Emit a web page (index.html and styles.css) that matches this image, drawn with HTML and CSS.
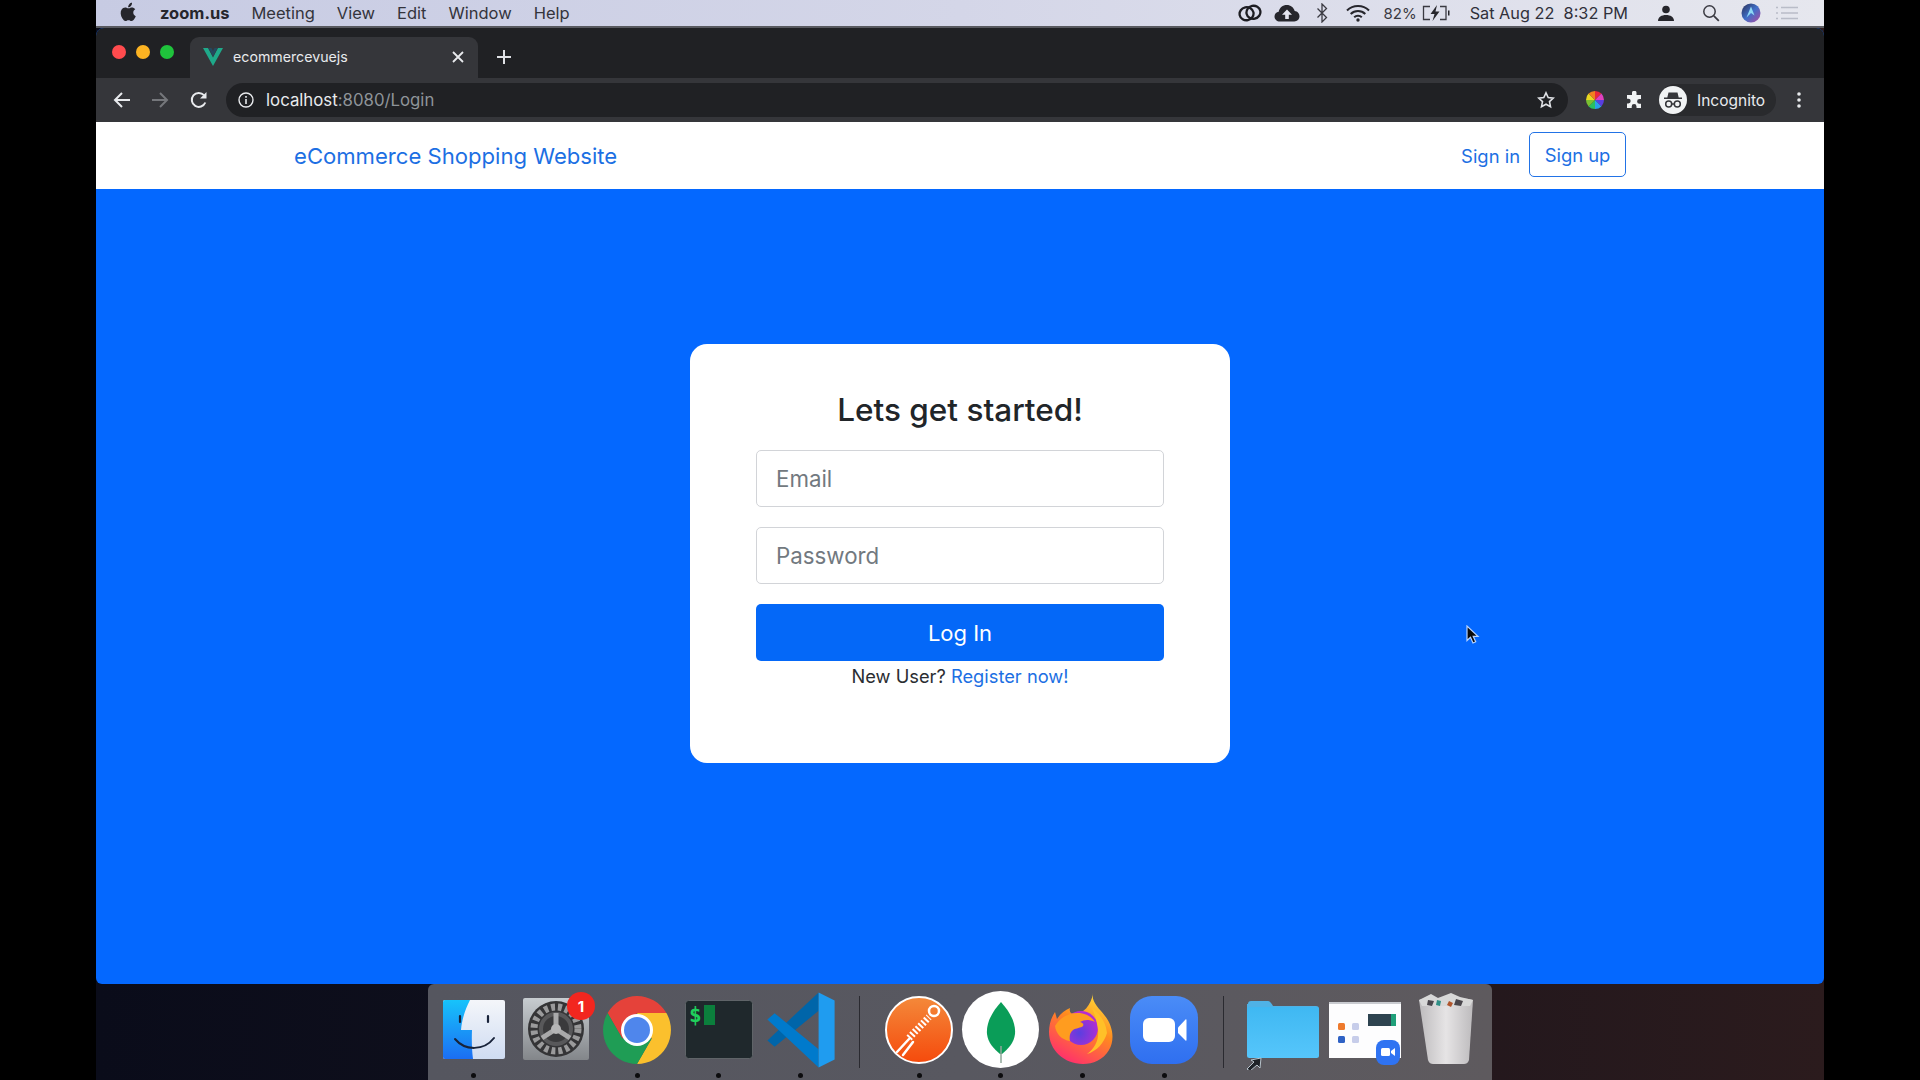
FILE: index.html
```html
<!DOCTYPE html>
<html lang="en">
<head>
<meta charset="utf-8">
<title>ecommercevuejs</title>
<link rel="stylesheet" href="styles.css">
</head>
<body>
<div class="screen">
  <header class="menubar">
    <svg class="apple" viewBox="0 0 20 24" width="17" height="20"><path fill="#26262c" d="M14.2 1c.1 1.500-.4 2.800-1.300 3.800-.9 1-2.100 1.600-3.300 1.500-.2-1.400.5-2.800 1.300-3.700C11.800 1.600 13.200 1 14.200 1zM18.700 17c-.5 1.200-.8 1.700-1.400 2.700-.9 1.400-2.100 3.100-3.700 3.100-1.400 0-1.700-.9-3.600-.9s-2.300.9-3.700.9c-1.500 0-2.700-1.500-3.600-2.900C.3 16.100 0 11.500 1.600 9.200 2.700 7.500 4.400 6.600 6 6.600c1.700 0 2.700.9 4.100.9 1.300 0 2.100-.9 4-.9 1.400 0 2.900.8 4 2.100-3.500 1.900-2.900 6.900.6 8.300z"/></svg>
    <span class="app-name">zoom.us</span>
    <span class="menu-item">Meeting</span>
    <span class="menu-item">View</span>
    <span class="menu-item">Edit</span>
    <span class="menu-item">Window</span>
    <span class="menu-item">Help</span>
    <div class="status">
      <svg class="st-cc" viewBox="0 0 24 18" width="24" height="18"><g fill="none" stroke="#1d1d22" stroke-width="2.300" transform="rotate(-12 12 9)"><ellipse cx="8.500" cy="9" rx="7" ry="6.500"/><ellipse cx="15.500" cy="9" rx="7" ry="6.500"/></g></svg>
      <svg class="st-cloud" viewBox="0 0 26 18" width="26" height="18"><path fill="#26262c" d="M6 17.500C2.800 17.500.5 15.400.5 12.500c0-2.500 1.800-4.400 4.200-4.800C5.500 3.700 8.800 1 12.800 1c3.800 0 7 2.500 7.900 6.100 2.800.2 4.800 2.500 4.800 5.200 0 2.900-2.300 5.200-5.200 5.200z"/><path fill="#e4e5ef" d="M13 5.500l5 5.200h-3.200v4.300h-3.600v-4.300H8z"/></svg>
      <svg class="st-bt" viewBox="0 0 12 20" width="12" height="20"><path fill="none" stroke="#3a3a42" stroke-width="1.300" d="M1.500 5.500l9 9-4.500 4.500V1l4.500 4.500-9 9"/></svg>
      <svg class="st-wifi" viewBox="0 0 24 18" width="24" height="18"><g fill="none" stroke="#26262c" stroke-width="2"><path d="M1 6.500c6-6 16-6 22 0"/><path d="M4.700 10c4-4 10.600-4 14.600 0"/><path d="M8.200 13.200c2-2 5.600-2 7.600 0"/></g><circle cx="12" cy="16" r="1.700" fill="#26262c"/></svg>
      <span class="st-pct">82%</span>
      <svg class="st-batt" viewBox="0 0 28 16" width="28" height="16"><g fill="none" stroke="#3a3a42" stroke-width="1.300"><path d="M8 1.500H1.500v13H8M18 1.500h6v13h-6"/></g><path fill="#26262c" d="M15 0L8.500 9h4L10.500 16l7-9.500h-4zM26 5.500h1.500v5H26z"/></svg>
      <span class="st-date">Sat Aug 22&nbsp; 8:32 PM</span>
      <svg class="st-person" viewBox="0 0 16 16" width="16" height="16"><circle cx="8" cy="4.500" r="3.800" fill="#26262c"/><path fill="#26262c" d="M0 16c0-4 3.500-6 8-6s8 2 8 6z"/></svg>
      <svg class="st-search" viewBox="0 0 18 18" width="18" height="18"><circle cx="7.500" cy="7.500" r="5.700" fill="none" stroke="#3a3a42" stroke-width="1.500"/><path stroke="#3a3a42" stroke-width="1.800" d="M11.800 11.800l5 5"/></svg>
      <svg class="st-siri" viewBox="0 0 20 20" width="20" height="20"><defs><linearGradient id="siri" x1="0" y1="0" x2="1" y2="1"><stop offset="0" stop-color="#2b2f55"/><stop offset=".5" stop-color="#3f6fc8"/><stop offset="1" stop-color="#b04ba0"/></linearGradient></defs><circle cx="10" cy="10" r="9.500" fill="url(#siri)"/><path fill="#8ed8f4" d="M10 3.500l3.500 9-3.500-2.500-4.500 4.500z"/></svg>
      <svg class="st-list" viewBox="0 0 22 14" width="22" height="14"><g stroke="#b9bcc8" stroke-width="1.400"><path d="M0 1.500h2M5 1.500h17M0 7h2M5 7h17M0 12.500h2M5 12.500h17"/></g></svg>
    </div>
  </header>

  <section class="browser">
    <div class="tabstrip">
      <div class="lights"><i class="light red"></i><i class="light amber"></i><i class="light green"></i></div>
      <div class="tab">
        <svg class="favicon" viewBox="0 0 20 18" width="20" height="18"><path fill="#1fa98a" d="M0 0h5l5 9.500L15 0h5L10 18z"/><path fill="#23485f" d="M5.500 0h3L10 3l1.500-3h3L10 8.500z"/></svg>
        <span class="tab-title">ecommercevuejs</span>
        <svg class="tab-close" viewBox="0 0 12 12" width="12" height="12"><path stroke="#e8eaed" stroke-width="1.800" d="M1 1l10 10M11 1L1 11"/></svg>
      </div>
      <svg class="new-tab" viewBox="0 0 16 16" width="16" height="16"><path stroke="#dfe1e5" stroke-width="2" d="M8 1v14M1 8h14"/></svg>
    </div>
    <div class="toolbar">
      <svg class="tool" viewBox="0 0 18 18" width="18" height="18"><path fill="none" stroke="#e8eaed" stroke-width="2" d="M17 9H2M9 2L2 9l7 7"/></svg>
      <svg class="tool" viewBox="0 0 18 18" width="18" height="18"><path fill="none" stroke="#75777b" stroke-width="2" d="M1 9h15M9 2l7 7-7 7"/></svg>
      <svg class="tool reload" viewBox="0 0 18 18" width="18" height="18"><path fill="none" stroke="#e8eaed" stroke-width="2" d="M15.300 11.500A7 7 0 1 1 14 4.200"/><path fill="#e8eaed" d="M16.500 1v6.500H10z"/></svg>
      <div class="omnibox">
        <svg viewBox="0 0 16 16" width="16" height="16"><circle cx="8" cy="8" r="7" fill="none" stroke="#e8eaed" stroke-width="1.400"/><path stroke="#e8eaed" stroke-width="1.600" d="M8 7v5M8 4v1.700"/></svg>
        <span class="url"><span class="url-host">localhost</span>:8080/Login</span>
        <svg class="star" viewBox="0 0 18 18" width="18" height="18"><path fill="none" stroke="#dfe1e5" stroke-width="1.600" d="M9 1.800l2.200 4.700 5.100.6-3.800 3.500 1 5.100L9 13.200l-4.500 2.500 1-5.100L1.700 7.100l5.100-.6z"/></svg>
      </div>
      <svg class="ext-wheel" viewBox="0 0 20 20" width="20" height="20">
        <path fill="#e8283c" d="M10 10L10 1 A9 9 0 0 1 16.400 3.600z"/><path fill="#e040c0" d="M10 10L16.400 3.600 A9 9 0 0 1 19 10z"/><path fill="#5a3de0" d="M10 10L19 10 A9 9 0 0 1 16.400 16.400z"/><path fill="#2aa0e8" d="M10 10L16.400 16.400 A9 9 0 0 1 10 19z"/><path fill="#28c060" d="M10 10L10 19 A9 9 0 0 1 3.600 16.400z"/><path fill="#7ac030" d="M10 10L3.600 16.400 A9 9 0 0 1 1 10z"/><path fill="#e8d820" d="M10 10L1 10 A9 9 0 0 1 3.600 3.600z"/><path fill="#f08020" d="M10 10L3.600 3.600 A9 9 0 0 1 10 1z"/>
      </svg>
      <svg class="ext-puzzle" viewBox="0 0 18 18" width="18" height="18"><path fill="#f1f3f4" d="M7 1.500a2.300 2.300 0 0 1 4.500 0V4h4.500v4h-1.500a2.400 2.400 0 0 0 0 4.800H16V17h-4.500v-1.500a2.400 2.400 0 0 0-4.800 0V17H2v-4.500h1.300a2.400 2.400 0 0 0 0-4.800H2V4h5z"/></svg>
      <div class="profile">
        <svg viewBox="0 0 28 28" width="28" height="28"><circle cx="14" cy="14" r="14" fill="#f1f3f4"/><path fill="#35363a" d="M9.500 6.500h9l1.200 5H23v1.500H5v-1.500h3.300z"/><g fill="none" stroke="#35363a" stroke-width="1.500"><circle cx="9.700" cy="18" r="3"/><circle cx="18.300" cy="18" r="3"/><path d="M12.700 18h2.600"/></g></svg>
        <span class="profile-name">Incognito</span>
      </div>
      <svg class="kebab" viewBox="0 0 4 16" width="4" height="16"><g fill="#e8eaed"><circle cx="2" cy="2" r="1.800"/><circle cx="2" cy="8" r="1.800"/><circle cx="2" cy="14" r="1.800"/></g></svg>
    </div>
    <nav class="site-nav">
      <a class="brand">eCommerce Shopping Website</a>
      <div class="nav-actions">
        <a class="nav-link">Sign in</a>
        <a class="nav-button">Sign up</a>
      </div>
    </nav>
    <main class="page">
      <form class="card">
        <h1 class="card-title">Lets get started!</h1>
        <input class="field" type="text" placeholder="Email">
        <input class="field" type="password" placeholder="Password">
        <button class="submit" type="button">Log In</button>
        <p class="hint">New User? <a class="hint-link">Register now!</a></p>
      </form>
      <svg class="cursor" viewBox="0 0 16 20" width="16" height="20"><path fill="#0a0a0a" stroke="#b9d4ff" stroke-width="1.200" d="M1 1v14.500l3.500-3.300 2.500 5.800 2.700-1.200-2.500-5.500H12z"/></svg>
    </main>
  </section>

  <footer class="desktop">
    <div class="dock">
      <div class="slot">
        <svg viewBox="0 0 80 80" width="80" height="80">
          <defs><linearGradient id="fb" x1="0" y1="0" x2="0" y2="1"><stop offset="0" stop-color="#17c3fb"/><stop offset="1" stop-color="#1b6ef3"/></linearGradient><linearGradient id="fw" x1="0" y1="0" x2="0" y2="1"><stop offset="0" stop-color="#f4f6fa"/><stop offset="1" stop-color="#cfdcf2"/></linearGradient></defs>
          <rect x="9" y="10" width="62" height="59" rx="2" fill="url(#fw)"/>
          <path fill="url(#fb)" d="M11 10h25c-4 8-8 18-9 30h11c-.4 9-.2 20 1 29H11a2 2 0 0 1-2-2V12a2 2 0 0 1 2-2z"/>
          <path stroke="#18233a" stroke-width="2.200" stroke-linecap="round" d="M26 26v6M54 26v6"/>
          <path fill="none" stroke="#18233a" stroke-width="2" stroke-linecap="round" d="M21 49c10 12 29 12 39-1"/>
        </svg>
        <i class="dot"></i>
      </div>
      <div class="slot">
        <svg viewBox="0 0 80 80" width="80" height="80">
          <defs><linearGradient id="sg" x1="0" y1="0" x2="0" y2="1"><stop offset="0" stop-color="#c7ccd0"/><stop offset="1" stop-color="#83868a"/></linearGradient></defs>
          <rect x="7" y="8" width="66" height="62" rx="2" fill="url(#sg)"/>
          <circle cx="40" cy="39" r="28" fill="#343436"/>
          <circle cx="40" cy="39" r="22" fill="none" stroke="#9a9a9b" stroke-width="7" stroke-dasharray="4 3"/>
          <circle cx="40" cy="39" r="17" fill="#58585a"/>
          <circle cx="40" cy="39" r="13" fill="#3a3a3c"/>
          <g stroke="#a9a9aa" stroke-width="5"><path d="M40 39V23M40 39l14 9M40 39l-14 9"/></g>
          <circle cx="40" cy="39" r="5" fill="#b5b5b6"/>
          <circle cx="65" cy="16" r="14" fill="#f2261f"/>
          <text class="badge-num" x="65" y="21.500" text-anchor="middle">1</text>
        </svg>
      </div>
      <div class="slot">
        <svg viewBox="0 0 80 80" width="80" height="80">
          <path fill="#e5423a" d="M69.400 23A34 34 0 0 0 10.600 23L25.300 48.500 40 23z"/>
          <path fill="#fbc02d" d="M69.400 23H40L54.700 48.500 40 74A34 34 0 0 0 69.400 23z"/>
          <path fill="#1f9d55" d="M10.600 23A34 34 0 0 0 40 74L54.700 48.500H25.300z"/>
          <circle cx="40" cy="40" r="16" fill="#fff"/>
          <circle cx="40" cy="40" r="13" fill="#4f86ec"/>
        </svg>
        <i class="dot"></i>
      </div>
      <div class="slot">
        <svg viewBox="0 0 80 80" width="80" height="80">
          <rect x="6.500" y="10.500" width="67" height="58" rx="3" fill="#1f282c" stroke="#5f6468"/>
          <text class="term-prompt" x="10" y="32">$</text>
          <rect x="25" y="15" width="11" height="20" fill="#0b7f3c"/>
        </svg>
        <i class="dot"></i>
      </div>
      <div class="slot">
        <svg viewBox="0 0 100 100" width="80" height="80">
          <polygon fill="#0065a9" points="8,63 17,71 72,26 72,3"/>
          <polygon fill="#007acc" points="8,37 17,29 72,74 72,97"/>
          <polygon fill="#1f9cf0" points="72,3 92,13 92,87 72,97"/>
        </svg>
        <i class="dot"></i>
      </div>
      <div class="dock-sep"></div>
      <div class="slot">
        <svg viewBox="0 0 80 80" width="80" height="80">
          <defs><linearGradient id="pm" x1="0" y1="0" x2="0" y2="1"><stop offset="0" stop-color="#f4893a"/><stop offset="1" stop-color="#f54a0c"/></linearGradient></defs>
          <circle cx="40" cy="40" r="33" fill="url(#pm)" stroke="#fff" stroke-width="2"/>
          <g fill="none" stroke="#fff" stroke-linecap="round">
            <path stroke-width="7" stroke-linecap="butt" stroke-dasharray="2 2" d="M30 48L50 27"/>
            <path stroke-width="2.500" d="M30 49L18 62M34 52L24 65"/>
            <circle cx="55" cy="21" r="5" stroke-width="2.500"/>
          </g>
        </svg>
        <i class="dot"></i>
      </div>
      <div class="slot">
        <svg viewBox="0 0 80 80" width="80" height="80">
          <circle cx="39.500" cy="39.500" r="38.500" fill="#fff"/>
          <path fill="#0a9d58" d="M40 12c9 10 15 21 14 32-1 9-7 15-13 20h-2c-6-5-12-11-13-20-1-11 5-22 14-32z"/>
          <path stroke="#8fa79a" stroke-width="1.500" d="M40 56v17"/>
        </svg>
        <i class="dot"></i>
      </div>
      <div class="slot">
        <svg viewBox="0 0 80 80" width="80" height="80">
          <defs>
            <linearGradient id="fx" x1=".8" y1="0" x2=".3" y2="1"><stop offset="0" stop-color="#ffe13a"/><stop offset=".45" stop-color="#ff8a1f"/><stop offset="1" stop-color="#ff2d6f"/></linearGradient>
            <radialGradient id="fg" cx=".45" cy=".65" r=".7"><stop offset="0" stop-color="#5a3fe0"/><stop offset="1" stop-color="#c22ad0"/></radialGradient>
          </defs>
          <path fill="url(#fx)" d="M50 3C48 12 56 18 62 26C70 36 72 50 66 60C60 70 50 74 40 74C21 74 6 60 6 42C6 35 8 28 12 22L14 29C17 24 22 20 27 18C26 22 28 24 31 24C40 24 48 16 50 3Z"/>
          <circle cx="38" cy="38" r="17" fill="url(#fg)"/>
          <path fill="#ff9c1f" d="M12 36c5-8 13-14 25-13 7 1 12 4 15 9-7-3-11-2-15 0 3 1 4 2 3 4-2 2-7 2-10 4-3 2-4 7-3 11C19 50 13 44 12 36z"/>
          <path fill="#ffc028" d="M49 18c8 6 14 14 15 25-3 10-10 18-20 21 8-6 12-14 11-24-1-8-3-15-6-22z"/>
        </svg>
        <i class="dot"></i>
      </div>
      <div class="slot">
        <svg viewBox="0 0 80 80" width="80" height="80">
          <defs><linearGradient id="zm" x1="0" y1="0" x2="0" y2="1"><stop offset="0" stop-color="#4a8cf7"/><stop offset="1" stop-color="#2f6ff0"/></linearGradient></defs>
          <rect x="6" y="6" width="68" height="68" rx="22" fill="url(#zm)"/>
          <rect x="19" y="28" width="32" height="24" rx="6" fill="#fff"/>
          <path fill="#fff" d="M54 37.500l7.500-8c.5-.4 1-.2 1 .5v20c0 .7-.5 1-1 .5L54 43z"/>
        </svg>
        <i class="dot"></i>
      </div>
      <div class="dock-sep"></div>
      <div class="slot">
        <svg viewBox="0 0 80 80" width="80" height="80">
          <defs><linearGradient id="fo" x1="0" y1="0" x2="0" y2="1"><stop offset="0" stop-color="#3fb8f2"/><stop offset="1" stop-color="#56c6fb"/></linearGradient></defs>
          <path fill="#4fb2e6" d="M5 14a3 3 0 0 1 3-3h17c2 0 3 2 5 5h43a3 3 0 0 1 3 3v10H4V14z"/>
          <rect x="4" y="17" width="72" height="51" rx="2.500" fill="url(#fo)"/>
          <path fill="#1f2328" stroke="#b8c4cc" stroke-width="1" d="M4 79l7-7-3-2 10-2-1 10-3-3-7 6z"/>
        </svg>
      </div>
      <div class="slot">
        <svg viewBox="0 0 80 80" width="80" height="80">
          <rect x="4" y="12" width="72" height="56" fill="#fdfdfe"/>
          <rect x="4" y="12" width="72" height="2" fill="#c9cbd0"/>
          <rect x="13" y="33" width="7" height="7" rx="1.500" fill="#ee7a2d"/>
          <rect x="27" y="33" width="7" height="7" rx="1.500" fill="#c7cdea"/>
          <rect x="13" y="46" width="7" height="7" rx="1.500" fill="#2f62c5"/>
          <rect x="27" y="46" width="7" height="7" rx="1.500" fill="#c7cdea"/>
          <rect x="43" y="24" width="28" height="12" fill="#2e4350"/>
          <rect x="66" y="24" width="5" height="12" fill="#1fa07a"/>
          <rect x="51" y="50" width="24" height="25" rx="8" fill="#2f73f2"/>
          <rect x="56" y="58" width="9" height="8" rx="1.500" fill="#fff"/>
          <path fill="#fff" d="M66 61l4-3v8l-4-3z"/>
        </svg>
      </div>
      <div class="slot">
        <svg viewBox="0 0 80 80" width="80" height="80">
          <defs><linearGradient id="tr" x1="0" y1="0" x2="1" y2="0"><stop offset="0" stop-color="#bdbbbd"/><stop offset=".5" stop-color="#e6e4e5"/><stop offset="1" stop-color="#bdbbbd"/></linearGradient></defs>
          <path fill="url(#tr)" d="M13 10c8-3 46-3 54 0l-4 60c-1 3-3 4-5 4H27c-2 0-4-1-5-4z"/>
          <path fill="#d8d8d8" d="M13 10l12-6 7 4 13-5 9 4 13 3-3 6H16z"/>
          <path fill="#4a464c" d="M22 10l6 1-2 5-5-1zM50 9l7 2-2 5-7-1z"/>
          <path fill="#2f8f86" d="M31 10l4 1-1 5-4-1z"/>
          <path fill="#b0552d" d="M43 11l4 2-2 4-4-2z"/>
        </svg>
      </div>
    </div>
  </footer>
</div>
</body>
</html>
```

FILE: styles.css
```css
* { box-sizing: border-box; }

html, body {
  margin: 0;
  height: 100%;
  overflow: hidden;
  background: #000;
}

body {
  font-family: Inter, "Liberation Sans", sans-serif;
}

.screen {
  width: 1728px;
  height: 1080px;
  margin: 0 auto;
  display: flex;
  flex-direction: column;
  background: linear-gradient(90deg, #0a0c1a 0%, #0f0f1c 25%, #2b1b1d 100%);
}

/* macOS menu bar */
.menubar {
  height: 28px;
  flex: none;
  display: flex;
  align-items: center;
  padding: 0 26px 0 24px;
  background: linear-gradient(90deg, #c7cbe3 0%, #d4d6e8 50%, #e6e7ee 100%);
  border-bottom: 2px solid #58595f;
  color: #26262c;
  font-size: 16.500px;
}

.apple { margin-right: 23px; margin-top: -2px; }

.app-name { font-weight: 700; margin-right: 22px; }

.menu-item { margin-right: 22px; color: #34343c; }

.status { margin-left: auto; display: flex; align-items: center; }

.st-cloud { margin-left: 12px; }
.st-bt { margin-left: 16px; }
.st-wifi { margin-left: 18px; }
.st-pct { margin-left: 13px; font-size: 15px; color: #3a3a42; }
.st-batt { margin-left: 5px; }
.st-date { margin-left: 20px; color: #30303a; font-size: 16.300px; }
.st-person { margin-left: 30px; }
.st-search { margin-left: 28px; }
.st-siri { margin-left: 21px; }
.st-list { margin-left: 15px; }

/* browser window */
.browser {
  flex: none;
  height: 956px;
  display: flex;
  flex-direction: column;
  border-radius: 8px 8px 6px 6px;
  overflow: hidden;
  background: #0468ff;
}

.tabstrip {
  height: 50px;
  flex: none;
  display: flex;
  align-items: flex-end;
  background: #202124;
}

.lights {
  display: flex;
  gap: 10px;
  align-self: flex-start;
  padding: 17px 0 0 16px;
  width: 94px;
}

.light { width: 14px; height: 14px; border-radius: 50%; }
.red { background: #ff4b4e; }
.amber { background: #fcb322; }
.green { background: #1fc33c; }

.tab {
  width: 288px;
  height: 41px;
  display: flex;
  align-items: center;
  padding: 0 14px 2px 13px;
  border-radius: 9px 9px 0 0;
  background: #35363a;
  color: #e8eaed;
  font-size: 14.200px;
}

.favicon { flex: none; }
.tab-title { margin-left: 10px; }
.tab-close { margin-left: auto; }

.new-tab { margin: 0 0 13px 18px; }

.toolbar {
  height: 44px;
  flex: none;
  display: flex;
  align-items: center;
  padding: 0 23px 0 17px;
  background: #35363a;
}

.tool { margin-right: 20px; }
.reload { margin-left: 1px; }

.omnibox {
  width: 1342px;
  height: 34px;
  margin-left: -2px;
  display: flex;
  align-items: center;
  padding: 0 13px 0 12px;
  border-radius: 17px;
  background: #202124;
}

.url { margin-left: 12px; color: #8f9499; font-size: 16.800px; }
.url-host { color: #e8eaed; }
.star { margin-left: auto; }

.ext-wheel { margin-left: 17px; }
.ext-puzzle { margin-left: 20px; }

.profile {
  height: 32px;
  display: flex;
  align-items: center;
  gap: 10px;
  margin-left: 16px;
  padding-right: 11px;
  border-radius: 16px;
  background: #292a2d;
  color: #e8eaed;
  font-size: 15.500px;
}

.kebab { margin-left: auto; }

/* site */
.site-nav {
  height: 67px;
  flex: none;
  display: flex;
  align-items: center;
  justify-content: space-between;
  padding: 0 198px;
  background: #fff;
}

.brand { color: #1c6fe3; font-size: 22.100px; }

.nav-actions { display: flex; align-items: center; gap: 9px; }

.nav-link { color: #1c6fe3; font-size: 18.400px; }

.nav-button {
  width: 97px;
  height: 45px;
  display: flex;
  align-items: center;
  justify-content: center;
  margin-top: -2px;
  border: 1.500px solid #2273e6;
  border-radius: 5px;
  color: #1c6fe3;
  font-size: 18.400px;
}

.page {
  position: relative;
  flex: 1;
  display: flex;
  justify-content: center;
  align-items: flex-start;
  padding-top: 155px;
}

.card {
  width: 540px;
  height: 419px;
  display: flex;
  flex-direction: column;
  padding: 46px 66px 0;
  border-radius: 17px;
  background: #fff;
}

.card-title {
  margin: 0 0 21px;
  height: 39px;
  line-height: 39px;
  text-align: center;
  color: #212529;
  font-size: 31.500px;
  font-weight: 500;
}

.field {
  height: 57px;
  flex: none;
  margin-bottom: 20px;
  padding: 0 19px;
  border: 1px solid #d2d4d8;
  border-radius: 5px;
  background: #fff;
  font-family: inherit;
  font-size: 22.300px;
}

.field::placeholder { color: #727980; opacity: 1; }

.submit {
  height: 57px;
  flex: none;
  border: 0;
  border-radius: 5px;
  background: #0468f8;
  color: #fff;
  font-family: inherit;
  font-size: 22px;
}

.hint {
  margin: 3px 0 0;
  text-align: center;
  line-height: 24px;
  color: #2a2d31;
  font-size: 18.300px;
}

.hint-link { color: #1c6fe3; }

.cursor {
  position: absolute;
  left: 1370px;
  top: 436px;
}

/* desktop + dock */
.desktop {
  flex: 1;
  display: flex;
  justify-content: center;
}

.dock {
  width: 1064px;
  height: 96px;
  display: flex;
  padding: 0 5px;
  border-radius: 6px 6px 0 0;
  background: linear-gradient(90deg, #55565f 0%, #585860 50%, #5e5a5e 100%);
}

.slot {
  width: 81.700px;
  flex: none;
  display: flex;
  flex-direction: column;
  align-items: center;
  padding-top: 6px;
}

.dot {
  width: 5px;
  height: 5px;
  margin-top: 3px;
  border-radius: 50%;
  background: #0c0c0e;
}

.dock-sep {
  width: 37px;
  flex: none;
  position: relative;
  display: flex;
  justify-content: center;
  padding-top: 12px;
  padding-bottom: 12px;
}

.dock-sep::before {
  content: "";
  width: 1px;
  background: #2a2a30;
}

.badge-num {
  fill: #fff;
  font-family: Inter, sans-serif;
  font-size: 15px;
  font-weight: 700;
}

.term-prompt {
  fill: #1fd05c;
  font-family: "DejaVu Sans Mono", monospace;
  font-size: 21px;
  font-weight: 700;
}
```
